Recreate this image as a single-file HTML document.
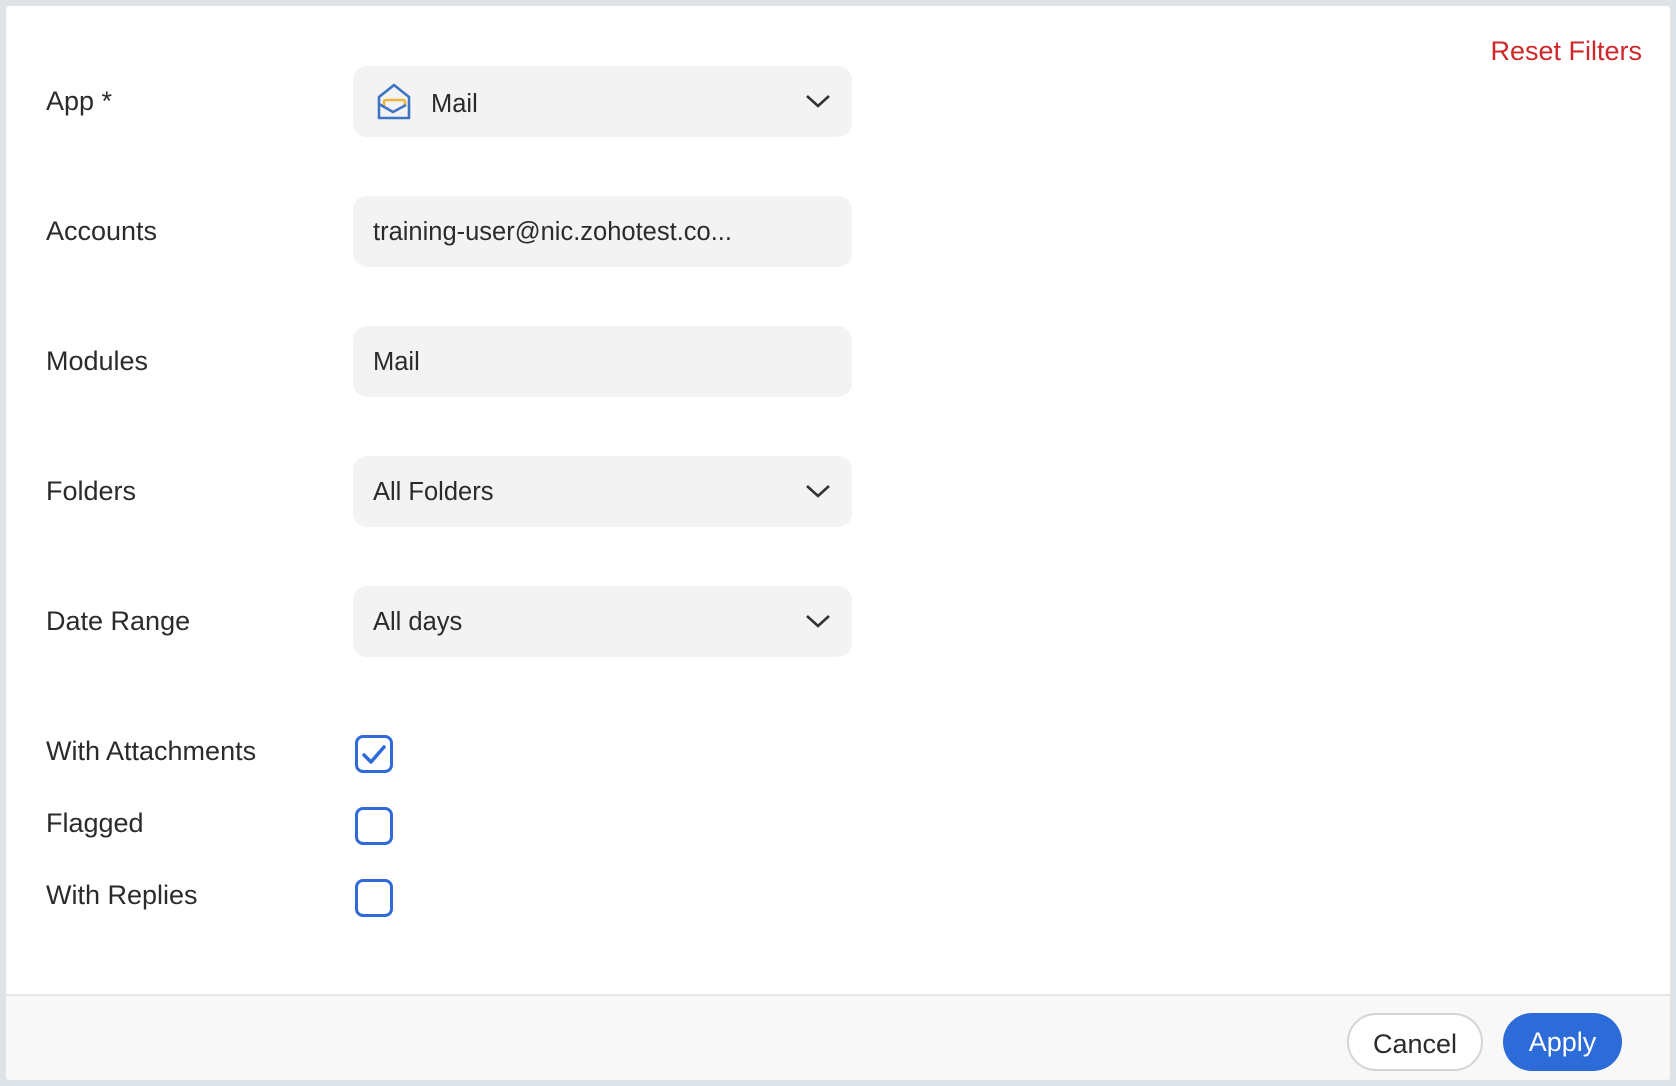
<!DOCTYPE html>
<html><head><meta charset="utf-8"><style>
html,body{margin:0;padding:0;width:1676px;height:1086px;background:#dde3e7;overflow:hidden;font-family:"Liberation Sans",sans-serif;color:#2b2b2b}
.panel{position:absolute;left:6px;top:6px;width:1664px;height:1074px;background:#fff;border-radius:3px;overflow:hidden}
.footer{position:absolute;left:0;top:988px;width:1664px;height:86px;background:#f8f8f8;border-top:2px solid #e4e6e8}
.label{position:absolute;left:40px;font-size:27px;line-height:30px}
.box{position:absolute;left:347px;width:499px;height:71px;background:#f3f3f3;border-radius:14px;font-size:25.5px;line-height:71px}
.box .t{position:absolute;left:20px;top:1px}
.chev{position:absolute;right:20px;top:24px}
.cb{position:absolute;left:349px;width:32px;height:32px;border:3.5px solid #2f6bd8;border-radius:8px}
.reset{position:absolute;right:28px;top:30px;color:#d0282a;font-size:27px}
.btn{position:absolute;top:17px;height:58px;border-radius:29px;font-size:27px;line-height:58px;text-align:center;box-sizing:border-box}
</style></head><body>
<div class="panel">
<div class="reset">Reset Filters</div>

<div class="label" style="top:80px">App *</div>
<div class="box" style="top:60px">
<svg style="position:absolute;left:24px;top:17px" width="34" height="38" viewBox="0 0 34 38"><path d="M17 2 L2 14 V35 H32 V14 Z" fill="none" stroke="#3d74c4" stroke-width="2.6" stroke-linejoin="round"/><path d="M7 24 V19 Q7 17 9 17 H26 Q28 17 28 19 V22" fill="none" stroke="#f0b43c" stroke-width="2.6" stroke-linejoin="round"/><path d="M2 21 L16 29 L29 22" fill="none" stroke="#3d74c4" stroke-width="2.6" stroke-linejoin="round"/></svg>
<span class="t" style="left:78px;top:3px">Mail</span>
<svg class="chev" width="28" height="22" viewBox="0 0 28 22"><path d="M3 6 L14 16 L25 6" fill="none" stroke="#333" stroke-width="2.6"/></svg>
</div>

<div class="label" style="top:210px">Accounts</div>
<div class="box" style="top:190px"><span class="t">training-user@nic.zohotest.co...</span></div>

<div class="label" style="top:340px">Modules</div>
<div class="box" style="top:320px"><span class="t">Mail</span></div>

<div class="label" style="top:470px">Folders</div>
<div class="box" style="top:450px"><span class="t">All Folders</span>
<svg class="chev" width="28" height="22" viewBox="0 0 28 22"><path d="M3 6 L14 16 L25 6" fill="none" stroke="#333" stroke-width="2.6"/></svg></div>

<div class="label" style="top:600px">Date Range</div>
<div class="box" style="top:580px"><span class="t">All days</span>
<svg class="chev" width="28" height="22" viewBox="0 0 28 22"><path d="M3 6 L14 16 L25 6" fill="none" stroke="#333" stroke-width="2.6"/></svg></div>

<div class="label" style="top:730px">With Attachments</div>
<div class="cb" style="top:729px"><svg width="32" height="32" viewBox="0 0 32 32" style="position:absolute;left:0;top:0"><path d="M6 17 L13 24 L26 9" fill="none" stroke="#2f6bd8" stroke-width="3.5" stroke-linecap="round" stroke-linejoin="round"/></svg></div>

<div class="label" style="top:802px">Flagged</div>
<div class="cb" style="top:801px"></div>

<div class="label" style="top:874px">With Replies</div>
<div class="cb" style="top:873px"></div>

<div class="footer">
<div class="btn" style="left:1341px;width:136px;background:#fff;border:2px solid #d4d4d4;color:#2b2b2b">Cancel</div>
<div class="btn" style="left:1497px;width:119px;background:#2d6bd9;color:#fff">Apply</div>
</div>
</div>
</body></html>
